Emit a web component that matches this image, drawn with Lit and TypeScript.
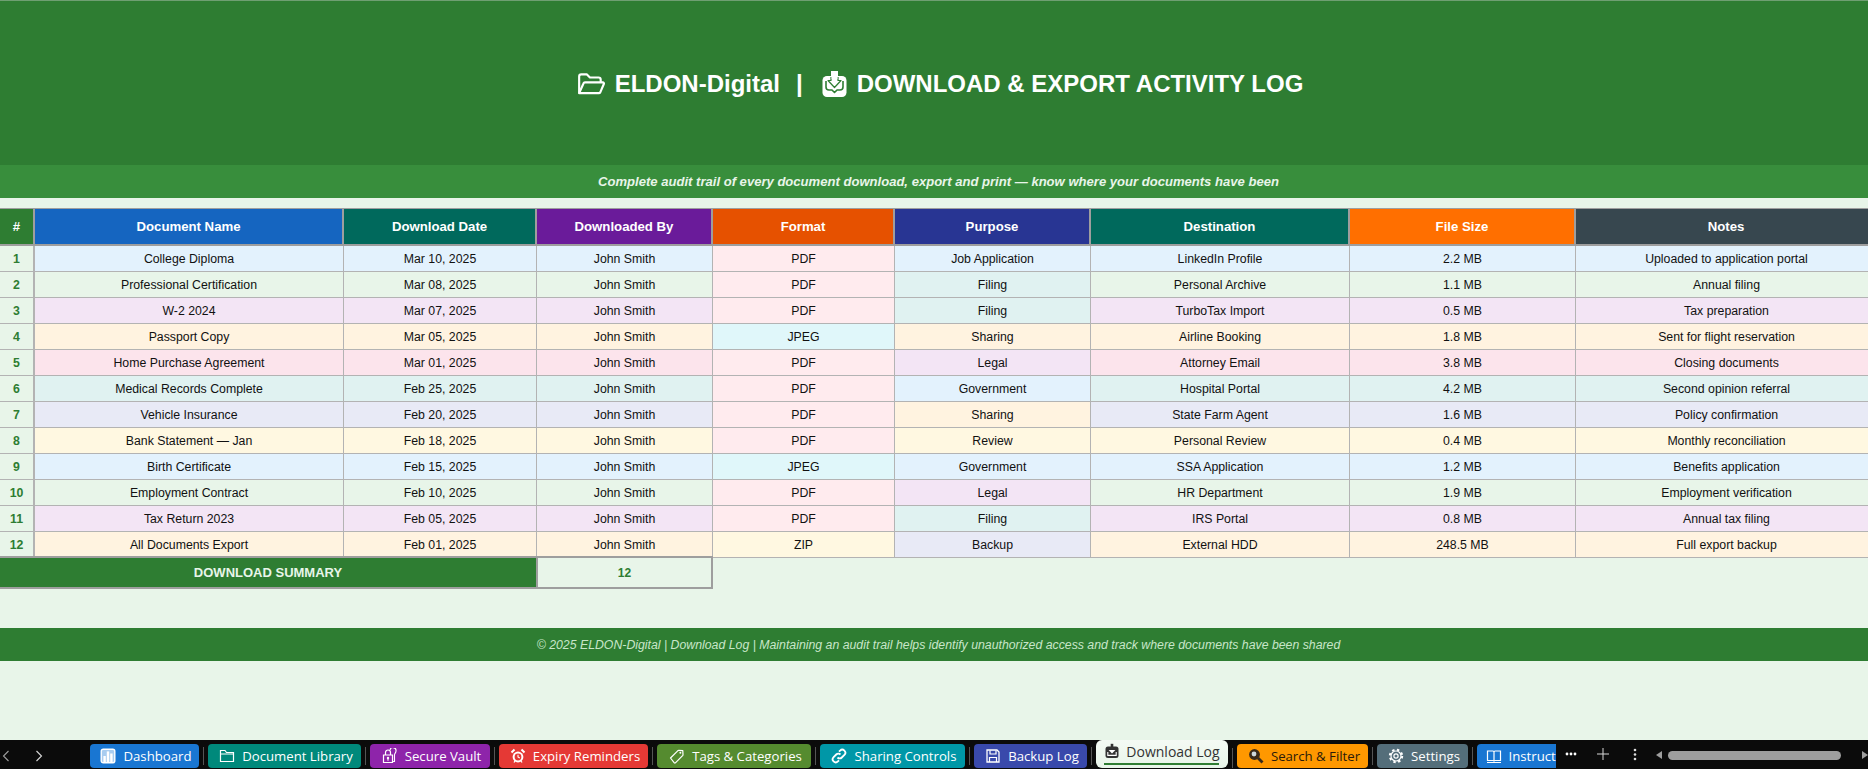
import { LitElement, css, html, svg } from 'lit'
import { customElement } from 'lit/decorators.js'

const PALETTE = ['#e3f2fd', '#e8f5e9', '#f3e5f5', '#fff3e0', '#fce4ec', '#e0f2f1', '#e8eaf6', '#fff8e1']

const FORMAT: Record<string, string> = { PDF: '#ffebee', JPEG: '#e0f7fa', ZIP: '#fff8e1' }
const PURPOSE: Record<string, string> = {
  'Job Application': '#e3f2fd',
  Filing: '#e0f2f1',
  Sharing: '#fff3e0',
  Legal: '#f3e5f5',
  Government: '#e3f2fd',
  Review: '#fff8e1',
  Backup: '#e8eaf6',
}

const COLUMNS = [
  ['#', '#2e7d32'],
  ['Document Name', '#1565c0'],
  ['Download Date', '#00695c'],
  ['Downloaded By', '#6a1b9a'],
  ['Format', '#e65100'],
  ['Purpose', '#283593'],
  ['Destination', '#00695c'],
  ['File Size', '#ff6f00'],
  ['Notes', '#37474f'],
]

const ROWS = [
  ['College Diploma', 'Mar 10, 2025', 'PDF', 'Job Application', 'LinkedIn Profile', '2.2 MB', 'Uploaded to application portal'],
  ['Professional Certification', 'Mar 08, 2025', 'PDF', 'Filing', 'Personal Archive', '1.1 MB', 'Annual filing'],
  ['W-2 2024', 'Mar 07, 2025', 'PDF', 'Filing', 'TurboTax Import', '0.5 MB', 'Tax preparation'],
  ['Passport Copy', 'Mar 05, 2025', 'JPEG', 'Sharing', 'Airline Booking', '1.8 MB', 'Sent for flight reservation'],
  ['Home Purchase Agreement', 'Mar 01, 2025', 'PDF', 'Legal', 'Attorney Email', '3.8 MB', 'Closing documents'],
  ['Medical Records Complete', 'Feb 25, 2025', 'PDF', 'Government', 'Hospital Portal', '4.2 MB', 'Second opinion referral'],
  ['Vehicle Insurance', 'Feb 20, 2025', 'PDF', 'Sharing', 'State Farm Agent', '1.6 MB', 'Policy confirmation'],
  ['Bank Statement — Jan', 'Feb 18, 2025', 'PDF', 'Review', 'Personal Review', '0.4 MB', 'Monthly reconciliation'],
  ['Birth Certificate', 'Feb 15, 2025', 'JPEG', 'Government', 'SSA Application', '1.2 MB', 'Benefits application'],
  ['Employment Contract', 'Feb 10, 2025', 'PDF', 'Legal', 'HR Department', '1.9 MB', 'Employment verification'],
  ['Tax Return 2023', 'Feb 05, 2025', 'PDF', 'Filing', 'IRS Portal', '0.8 MB', 'Annual tax filing'],
  ['All Documents Export', 'Feb 01, 2025', 'ZIP', 'Backup', 'External HDD', '248.5 MB', 'Full export backup'],
]

const ICONS: Record<string, unknown> = {
  chart: svg`<rect x="1.2" y="1.2" width="13.6" height="13.6" rx="2" fill="#a9cdf0" stroke="#fff" stroke-width="1.4"/><rect x="3.4" y="8" width="2.4" height="6" fill="#fff"/><rect x="6.8" y="3.4" width="2.4" height="10.6" fill="#fff"/><rect x="10.2" y="5.5" width="2.4" height="8.5" fill="#fff"/>`,
  folder: svg`<path d="M1.5 13.5v-11h4.5l1.5 2h7v9z" fill="none" stroke="currentColor" stroke-width="1.2"/><path d="M1.5 6h13" stroke="currentColor" stroke-width="1"/>`,
  vault: svg`<path d="M1.5 14.5V7h9v7.5zM3.5 7V4.5a2.5 2.5 0 0 1 5 0V7" fill="none" stroke="currentColor" stroke-width="1.2"/><path d="M8 2.2a3 3 0 0 1 6 .8c0 2-1.5 2.2-1.5 4v6.5h-2" fill="none" stroke="currentColor" stroke-width="1.1"/><circle cx="6" cy="10" r="1.2" fill="currentColor"/><path d="M6 10.5v2.2" stroke="currentColor" stroke-width="1.1"/>`,
  alarm: svg`<circle cx="8" cy="9" r="5.4" fill="#fff"/><circle cx="8" cy="9" r="3.4" fill="#e53935"/><path d="M8 6.8V9l1.8 1" stroke="#fff" fill="none" stroke-width="1.1"/><path d="M1.5 4.5l3-3M14.5 4.5l-3-3" stroke="#fff" stroke-width="2"/><path d="M4 14.5l1-1.5M12 14.5l-1-1.5" stroke="#fff" stroke-width="1.3"/>`,
  tag: svg`<path d="M1.5 10l7.2-7.2a1.5 1.5 0 0 1 1.1-.4l4 .2.2 4a1.5 1.5 0 0 1-.4 1.1L6.4 14.9a.8.8 0 0 1-1.1 0z" fill="none" stroke="currentColor" stroke-width="1.2" stroke-linejoin="round"/><circle cx="11.4" cy="4.8" r="1" fill="currentColor"/>`,
  link: svg`<path d="M6.5 9.5a3 3 0 0 0 4.3 0l2.6-2.6a3 3 0 0 0-4.3-4.3L8 3.7M9.5 6.5a3 3 0 0 0-4.3 0L2.6 9.1a3 3 0 0 0 4.3 4.3L8 12.3" fill="none" stroke="currentColor" stroke-width="1.8"/>`,
  save: svg`<path d="M2 2h10l2 2v10H2z" fill="none" stroke="currentColor" stroke-width="1.3"/><path d="M5 2.5v3.5h6V2.5M4.5 14V9.5h7V14" fill="none" stroke="currentColor" stroke-width="1.2"/>`,
  download: svg`<rect x="1.5" y="3.5" width="13" height="11.5" rx="2.5" fill="currentColor"/><path d="M8 .8v7" stroke="currentColor" stroke-width="2.6"/><path d="M4.6 7l3.4 3.6L11.4 7" fill="#fff"/><path d="M3.8 9v3.4h8.4V9" fill="none" stroke="#fff" stroke-width="1.1"/>`,
  search: svg`<circle cx="6.5" cy="6.5" r="5.4" fill="#3a2a1a"/><circle cx="6" cy="6" r="2.4" fill="#cfd8dc"/><path d="M10 10l4.5 4.5" stroke="#3a2a1a" stroke-width="2.8"/>`,
  gear: svg`<circle cx="8" cy="8" r="2.1" fill="none" stroke="currentColor" stroke-width="1.2"/><circle cx="8" cy="8" r="5" fill="none" stroke="currentColor" stroke-width="1.2"/><circle cx="8" cy="8" r="6.2" fill="none" stroke="currentColor" stroke-width="2" stroke-dasharray="2.4 2.5"/>`,
  book: svg`<path d="M1.5 3h5.5a1 1 0 0 1 1 1v9.5a1 1 0 0 0-1-1H1.5zM14.5 3H9a1 1 0 0 0-1 1v9.5a1 1 0 0 1 1-1h5.5zM1 14.5h14" fill="none" stroke="currentColor" stroke-width="1.2"/>`,
}

const icon = (name: string, size = 16) =>
  html`<svg width=${size} height=${size} viewBox="0 0 16 16">${ICONS[name]}</svg>`

const TABS = [
  { name: 'Dashboard', icon: 'chart', color: '#1976d2', width: 109 },
  { name: 'Document Library', icon: 'folder', color: '#00897b', width: 153 },
  { name: 'Secure Vault', icon: 'vault', color: '#8e24aa', width: 120 },
  { name: 'Expiry Reminders', icon: 'alarm', color: '#e53935', width: 149 },
  { name: 'Tags & Categories', icon: 'tag', color: '#558b2f', width: 154 },
  { name: 'Sharing Controls', icon: 'link', color: '#0097a7', width: 145 },
  { name: 'Backup Log', icon: 'save', color: '#3949ab', width: 113 },
  { name: 'Download Log', icon: 'download', color: '', width: 132 },
  { name: 'Search & Filter', icon: 'search', color: '#ff9800', width: 131 },
  { name: 'Settings', icon: 'gear', color: '#546e7a', width: 91 },
  { name: 'Instructions', icon: 'book', color: '#1976d2', width: 110 },
]

@customElement('app-root')
export class AppRoot extends LitElement {
  static styles = css`
    :host {
      display: flex;
      flex-direction: column;
      height: 769px;
      overflow: hidden;
      background: #e8f5e9;
      font-family: 'Liberation Sans', Arial, sans-serif;
    }

    /* the sheet is a little wider than the window, so centred text sits right of the middle */
    .banner,
    .subtitle,
    .footer {
      flex: none;
      box-sizing: border-box;
      width: 1877px;
      display: flex;
      align-items: center;
      justify-content: center;
    }

    .banner {
      height: 165px;
      border-top: 1px solid #6f9f72;
      padding: 2px 0 0 3px;
      background: #2e7d32;
      color: #fff;
      font-size: 24px;
      font-weight: 700;
      white-space: pre;
    }

    .banner svg {
      flex: none;
    }

    .folder {
      margin-right: 10px;
    }

    .mark {
      margin: 0 10px 0 19px;
    }

    .divider {
      margin-left: 16px;
    }

    .subtitle {
      height: 33px;
      background: #388e3c;
      color: #e8f5e9;
      font-size: 13.07px;
      font-style: italic;
      font-weight: 700;
    }

    .table {
      margin-top: 10px;
      display: grid;
      grid-template-columns: 35px 309px 193px 176px 182px 196px 259px 226px 302px;
      grid-auto-rows: 26px;
      grid-template-rows: 38px;
      font-size: 12.3px;
      color: #111;
    }

    .cell,
    .head {
      display: flex;
      align-items: center;
      justify-content: center;
      box-sizing: border-box;
      border-right: 1px solid #b3b3b3;
      border-bottom: 1px solid #b3b3b3;
      white-space: nowrap;
    }

    .head {
      color: #fff;
      font-size: 13.2px;
      font-weight: 700;
      border-top: 1px solid #9e9e9e;
      border-right: 2px solid #9e9e9e;
      border-bottom: 2px solid #9e9e9e;
    }

    .num {
      background: #e8f5e9;
      color: #2e7d32;
      font-weight: 700;
      border-right: 2px solid #b3b3b3;
    }

    .summary {
      margin-top: -2px;
      display: grid;
      grid-template-columns: 536px 177px;
      height: 33px;
      flex: none;
      font-size: 12px;
      font-weight: 700;
    }

    .summary div {
      display: flex;
      align-items: center;
      justify-content: center;
      box-sizing: border-box;
      border-bottom: 2px solid #9e9e9e;
    }

    .summary-label {
      background: #2e7d32;
      color: #e8f5e9;
      border-top: 2px solid #9e9e9e;
      font-size: 13px;
    }

    .summary-value {
      background: #e8f5e9;
      color: #2e7d32;
      border: 2px solid #9e9e9e;
    }

    .footer {
      margin-top: 39px;
      height: 33px;
      background: #2e7d32;
      color: #c8e6c9;
      font-size: 12.3px;
      font-style: italic;
    }

    .tabbar {
      margin-top: auto;
      height: 29px;
      flex: none;
      position: relative;
      background: #0b0b0b;
      color: #fff;
      display: flex;
      font-family: 'Open Sans', 'Noto Sans', sans-serif;
      font-size: 13.2px;
    }

    .nav {
      width: 90px;
      flex: none;
      display: flex;
      align-items: center;
      padding: 2px 0 0 2px;
      box-sizing: border-box;
      gap: 25px;
    }

    .tabs {
      width: 1466px;
      flex: none;
      display: flex;
      overflow: hidden;
      padding-top: 4px;
      box-sizing: border-box;
    }

    .tab {
      flex: none;
      box-sizing: border-box;
      height: 24px;
      border-radius: 4px;
      display: flex;
      align-items: center;
      justify-content: center;
      gap: 7px;
      padding: 0 0 1px 3px;
      margin-right: 9px;
      position: relative;
      white-space: nowrap;
    }

    .tab::after {
      content: '';
      position: absolute;
      right: -5px;
      top: 3px;
      bottom: 3px;
      width: 1px;
      background: #555;
    }

    .tab.active {
      height: 28px;
      margin-top: -4px;
      padding: 0 0 6px 0;
      gap: 6px;
      font-size: 14px;
      background: linear-gradient(#f4faf4, #e8f5e9);
      color: #333;
      border-radius: 6px;
    }

    .tab.active::after {
      top: 8px;
      bottom: 0;
    }

    .underline {
      position: absolute;
      left: 8px;
      right: 9px;
      bottom: 3px;
      height: 2px;
      background: #2e7d32;
    }

    .search {
      color: #2a1a0a;
    }

    .controls {
      flex: 1;
      position: relative;
      color: #d0d0d0;
    }

    .ctl {
      position: absolute;
      top: 8px;
      font-size: 16px;
      line-height: 14px;
    }

    .thumb {
      position: absolute;
      left: 112px;
      width: 173px;
      top: 11px;
      height: 9px;
      border-radius: 4.5px;
      background: #9e9e9e;
    }

    .arrow {
      position: absolute;
      top: 11px;
      width: 0;
      height: 0;
      border-top: 4px solid transparent;
      border-bottom: 4px solid transparent;
    }
  `

  private _row(row: string[], i: number) {
    const [name, date, format, purpose, dest, size, notes] = row
    const tint = `background:${PALETTE[i % PALETTE.length]}`
    return html`
      <div class="cell num">${i + 1}</div>
      <div class="cell" style=${tint}>${name}</div>
      <div class="cell" style=${tint}>${date}</div>
      <div class="cell" style=${tint}>John Smith</div>
      <div class="cell" style="background:${FORMAT[format]}">${format}</div>
      <div class="cell" style="background:${PURPOSE[purpose]}">${purpose}</div>
      <div class="cell" style=${tint}>${dest}</div>
      <div class="cell" style=${tint}>${size}</div>
      <div class="cell" style=${tint}>${notes}</div>
    `
  }

  render() {
    return html`
      <div class="banner">
        <svg class="folder" width="28" height="22" viewBox="0 0 26 20">
          <path d="M2 18V3a2 2 0 0 1 2-2h5l3 3h8a2 2 0 0 1 2 2v2" fill="none" stroke="#fff" stroke-width="2" stroke-linejoin="round" stroke-linecap="round"/>
          <path d="M2 18.5L6 9.5a1.5 1.5 0 0 1 1.4-1H24a1 1 0 0 1 1 1.3l-3.4 8a1.5 1.5 0 0 1-1.4.7z" fill="none" stroke="#fff" stroke-width="2" stroke-linejoin="round"/>
        </svg>
        <span>ELDON-Digital</span><span class="divider">|</span>
        <svg class="mark" width="25" height="26" viewBox="0 0 25 26">
          <rect x="0.5" y="5" width="24" height="21" rx="4.5" fill="#fff"/>
          <path d="M4 10v6a3 3 0 0 0 3 3h3l2.5 2.5L15 19h3a3 3 0 0 0 3-3v-6" fill="none" stroke="#2e7d32" stroke-width="1.6" stroke-linejoin="round"/>
          <rect x="9" y="0" width="7" height="7" fill="#fff"/>
          <path d="M9 6v3.5H6l6.5 7 6.5-7h-3V6" fill="#fff" stroke="#2e7d32" stroke-width="1.2" stroke-linejoin="round"/>
          <rect x="9.6" y="3" width="5.8" height="5" fill="#fff"/>
        </svg>
        <span>DOWNLOAD &amp; EXPORT ACTIVITY LOG</span>
      </div>
      <div class="subtitle">Complete audit trail of every document download, export and print — know where your documents have been</div>
      <div class="table">
        ${COLUMNS.map(([label, color]) => html`<div class="head" style="background:${color}">${label}</div>`)}
        ${ROWS.map((row, i) => this._row(row, i))}
      </div>
      <div class="summary">
        <div class="summary-label">DOWNLOAD SUMMARY</div>
        <div class="summary-value">12</div>
      </div>
      <div class="footer">© 2025 ELDON-Digital | Download Log | Maintaining an audit trail helps identify unauthorized access and track where documents have been shared</div>
      <div class="tabbar">
        <div class="nav">
          <svg width="8" height="12" viewBox="0 0 8 12"><path d="M6.5 1L1.5 6l5 5" fill="none" stroke="#9e9e9e" stroke-width="1.1"/></svg>
          <svg width="8" height="12" viewBox="0 0 8 12"><path d="M1.5 1l5 5-5 5" fill="none" stroke="#d8d8d8" stroke-width="1.1"/></svg>
        </div>
        <div class="tabs">
          ${TABS.map(t => html`
            <div class="tab ${t.color ? '' : 'active'} ${t.icon}" style="width:${t.width}px;${t.color ? `background:${t.color}` : ''}">
              ${icon(t.icon)}<span>${t.name}</span>
              ${t.color ? '' : html`<div class="underline"></div>`}
            </div>
          `)}
        </div>
        <div class="controls">
          <svg class="ctl" style="left:9px;top:12px" width="12" height="4" viewBox="0 0 12 4"><circle cx="2" cy="2" r="1.4" fill="#fff"/><circle cx="6" cy="2" r="1.4" fill="#fff"/><circle cx="10" cy="2" r="1.4" fill="#fff"/></svg>
          <svg class="ctl" style="left:41px;top:8px" width="12" height="12" viewBox="0 0 12 12"><path d="M6 0v12M0 6h12" stroke="#d8d8d8" stroke-width="1"/></svg>
          <svg class="ctl" style="left:77px;top:8px" width="4" height="13" viewBox="0 0 4 13"><circle cx="2" cy="2" r="1.3" fill="#ddd"/><circle cx="2" cy="6.5" r="1.3" fill="#ddd"/><circle cx="2" cy="11" r="1.3" fill="#ddd"/></svg>
          <div class="arrow" style="left:100px;border-right:6px solid #9e9e9e"></div>
          <div class="thumb"></div>
          <div class="arrow" style="left:306px;border-left:6px solid #9e9e9e"></div>
        </div>
      </div>
    `
  }
}

declare global {
  interface HTMLElementTagNameMap {
    'app-root': AppRoot
  }
}
